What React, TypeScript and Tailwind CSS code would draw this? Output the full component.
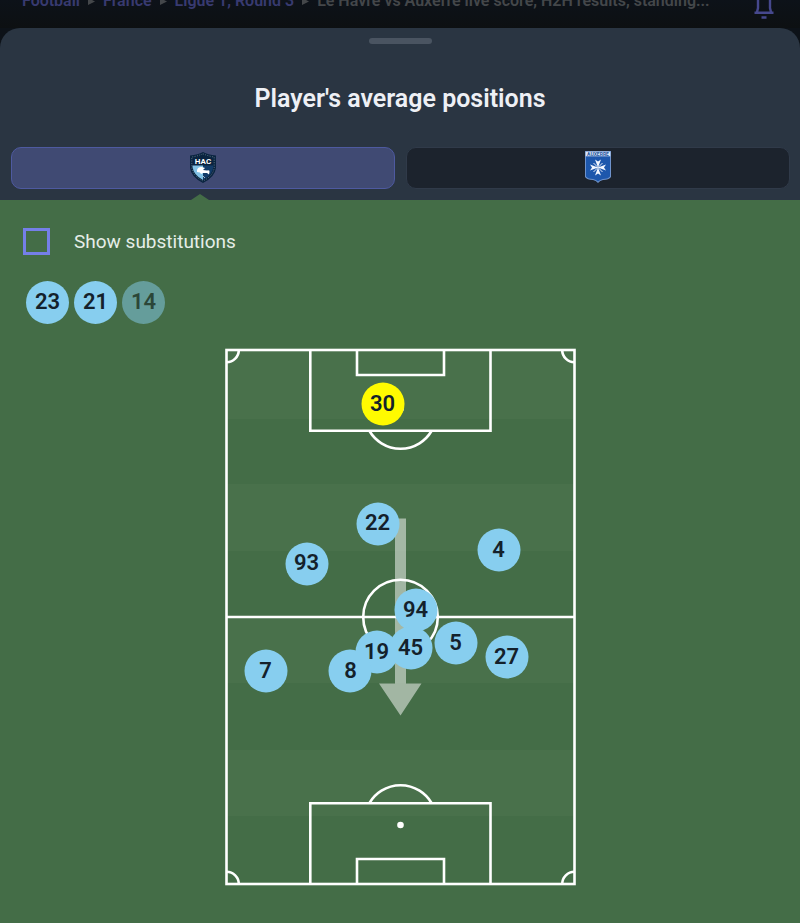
import { useState } from "react";

type Player = { number: number; x: number; y: number; keeper?: boolean };

const PITCH_WIDTH = 351;
const PITCH_HEIGHT = 538;

// Average positions in pitch units, measured from the top left corner.
const players: Player[] = [
  { number: 30, x: 158, y: 56, keeper: true },
  { number: 22, x: 153, y: 176 },
  { number: 93, x: 82, y: 216 },
  { number: 4, x: 274, y: 202 },
  { number: 94, x: 191, y: 262 },
  { number: 19, x: 152, y: 304 },
  { number: 45, x: 186, y: 300 },
  { number: 5, x: 231, y: 295 },
  { number: 27, x: 282, y: 309 },
  { number: 7, x: 41, y: 323 },
  { number: 8, x: 126, y: 323 },
];

const substitutes = [
  { number: 23, used: true },
  { number: 21, used: true },
  { number: 14, used: false },
];

function NumberBadge({ number, keeper, faded }: { number: number; keeper?: boolean; faded?: boolean }) {
  return (
    <span
      className={`flex size-[43px] items-center justify-center rounded-full pb-0.5 text-[22px] leading-none font-semibold text-[#14212b] ${
        keeper ? "bg-[#fffb00]" : "bg-[#87ceef]"
      } ${faded ? "opacity-50" : ""}`}
    >
      {number}
    </span>
  );
}

function Separator() {
  return (
    <svg viewBox="0 0 7 7" className="size-[7px] shrink-0" aria-hidden="true">
      <path d="M0 0 L7 3.5 L0 7Z" fill="#44474a" />
    </svg>
  );
}

function LeHavreCrest() {
  return (
    <svg viewBox="0 0 26 31" className="h-[31px] w-[26px]" aria-hidden="true">
      <path d="M13 0 Q18 2.5 26 3.5 V16 Q25 25 13 31 Q1 25 0 16 V3.5 Q8 2.5 13 0Z" fill="#0a2440" />
      <path d="M13 1.8 Q18 4 24.2 5 V16 Q23 24 13 29 Q3 24 1.8 16 V5 Q8 4 13 1.8Z" fill="none" stroke="#8aa5ac" strokeWidth=".6" strokeDasharray="1 1.4" />
      <path d="M2.5 13.5 H13 V28 Q3.5 23 2.5 15Z" fill="#83c3e6" />
      <path d="M13 13.5 H23.5 Q23 23 13 28Z" fill="#123c69" />
      <text x="13" y="11.8" textAnchor="middle" fontSize="8" fontWeight="700" fill="#fff">HAC</text>
      <path d="M7 18 Q8 14.5 12 15 L15 16 L13 18 L17 18.5 Q20 17.5 19.5 20 L19 22.5 L17 21 L13 21 L11 22 L10 20.5 L7 20Z" fill="#fff" />
      <path d="M13 24 L15 26" stroke="#a9bccb" strokeWidth="1" />
    </svg>
  );
}

function AuxerreCrest() {
  return (
    <svg viewBox="0 0 26 32" className="h-8 w-[26px]" aria-hidden="true">
      <path d="M0 0 H26 V26 Q24 29 18 29 Q15 29.5 13 32 Q11 29.5 8 29 Q2 29 0 26Z" fill="#6f93cc" />
      <path d="M1 5 H25 V25.5 Q23 28 18 28 Q15 28.5 13 30.5 Q11 28.5 8 28 Q3 28 1 25.5Z" fill="#1d57ac" />
      <rect x=".7" y=".7" width="24.6" height="4.6" fill="#dce6f4" />
      <text x="13" y="4.7" textAnchor="middle" fontSize="5" fontWeight="700" fill="#24579f">AUXERRE</text>
      <g fill="#f3f7ff" transform="translate(13 16.5)">
        <path d="M0 0 L-3 -8 L0 -6 L3 -8Z M0 0 L-3 8 L0 6 L3 8Z M0 0 L-8 -3 L-6 0 L-8 3Z M0 0 L8 -3 L6 0 L8 3Z" />
        <path d="M-4.5 -4.5 L4.5 4.5 M4.5 -4.5 L-4.5 4.5" stroke="#f3f7ff" strokeWidth=".9" />
      </g>
    </svg>
  );
}

function Pitch() {
  return (
    <svg viewBox={`0 0 ${PITCH_WIDTH} ${PITCH_HEIGHT}`} className="block w-full" aria-hidden="true">
      <g fill="#49714b">
        <rect x="2" y="3" width="347" height="68" />
        <rect x="2" y="136" width="347" height="67" />
        <rect x="2" y="269" width="347" height="66" />
        <rect x="2" y="402" width="347" height="66" />
      </g>
      <g fill="none" stroke="#fff" strokeWidth="2.6">
        <rect x="1.5" y="2" width="348" height="534" />
        <path d="M2 269 H349" />
        <circle cx="175.5" cy="269" r="37.3" />
        <path d="M85.3 2 V82.7 H265.5 V2 M132 2 V27 H219 V2" />
        <path d="M85.3 536 V455.3 H265.5 V536 M132 536 V511 H219 V536" />
        <path d="M144.5 83 A36 36 0 0 0 206.5 83 M144.5 455 A36 36 0 0 1 206.5 455" />
        <path d="M13.8 2 A12.3 12.3 0 0 1 1.5 14.3 M337.2 2 A12.3 12.3 0 0 0 349.5 14.3 M13.8 536 A12.3 12.3 0 0 0 1.5 523.7 M337.2 536 A12.3 12.3 0 0 1 349.5 523.7" />
      </g>
      <circle cx="175.5" cy="61" r="3.3" fill="#fff" />
      <circle cx="175.5" cy="477" r="3.3" fill="#fff" />
      <path d="M170 170.5 H181 V335.5 H196.5 L175.5 367.5 L154 335.5 H170Z" fill="#fff" fillOpacity=".5" />
    </svg>
  );
}

export default function App() {
  const [team, setTeam] = useState(0);
  const [showSubs, setShowSubs] = useState(false);

  const tabClass = "flex h-[42px] flex-1 items-center justify-center rounded-[10px] border pb-0.5";
  const activeTab = "border-[#4e5aa0] bg-[#404a73]";
  const idleTab = "border-[#303a49] bg-[#1c232d]";

  return (
    <div className="min-h-screen bg-[#0d1218] font-[Roboto,'Liberation_Sans',sans-serif]">
      <header className="flex h-7 items-start justify-between overflow-hidden bg-linear-to-b from-[#0d1219] to-[#0d1012] pr-6 pl-[22px]">
        <nav className="-mt-[9px] flex min-w-0 items-center gap-2 text-base leading-5 font-semibold whitespace-nowrap text-[#383a70]">
          <a href="#football">Football</a>
          <Separator />
          <a href="#france">France</a>
          <Separator />
          <a href="#ligue-1">Ligue 1, Round 3</a>
          <Separator />
          <span className="truncate text-[#44474a]">Le Havre vs Auxerre live score, H2H results, standing...</span>
        </nav>
        <button type="button" aria-label="Notifications" className="-mt-2 shrink-0">
          <svg viewBox="0 0 24 28" className="h-7 w-6" fill="none" stroke="#46488d" strokeWidth="2.4">
            <path d="M2.5 20.7 H21.5 M5 20 L6 16 V8 Q6 2 12 2 Q18 2 18 8 V16 L19 20 M9.5 25.5 H14.5" />
          </svg>
        </button>
      </header>

      <main className="flex min-h-[895px] flex-col overflow-hidden rounded-t-[20px] bg-[#2a3542]">
        <div className="mx-auto mt-2.5 h-1.5 w-[63px] shrink-0 rounded-[3px] bg-[#4a5461]" />
        <h1 className="mt-[37px] text-center text-[25px] leading-9 font-semibold text-[#eef0f5]">Player's average positions</h1>

        <div role="tablist" className="mt-[30px] flex gap-[11px] pr-2.5 pl-[11px]">
          <button type="button" role="tab" aria-label="Le Havre" aria-selected={team === 0} onClick={() => setTeam(0)} className={`${tabClass} ${team === 0 ? activeTab : idleTab}`}>
            <LeHavreCrest />
          </button>
          <button type="button" role="tab" aria-label="Auxerre" aria-selected={team === 1} onClick={() => setTeam(1)} className={`${tabClass} ${team === 1 ? activeTab : idleTab}`}>
            <AuxerreCrest />
          </button>
        </div>

        <div className={`mt-[5px] flex h-1.5 w-1/2 justify-center ${team === 1 ? "self-end" : ""}`}>
          <svg viewBox="0 0 18 6" className="h-1.5 w-[18px]" aria-hidden="true">
            <path d="M0 6 L9 0 L18 6Z" fill="#446d47" />
          </svg>
        </div>

        <section className="flex-1 bg-[#446d47] pt-7">
          <label className="ml-[23px] flex w-fit items-center gap-6 text-[19px] leading-[27px] text-[#e6eee8]">
            <input
              type="checkbox"
              checked={showSubs}
              onChange={(e) => setShowSubs(e.target.checked)}
              className="size-[27px] appearance-none border-3 border-[#757fe8] checked:bg-[#757fe8]"
            />
            Show substitutions
          </label>

          <div className="mt-[26px] ml-[26px] flex gap-[5px]">
            {substitutes.map((s) => (
              <NumberBadge key={s.number} number={s.number} faded={!s.used} />
            ))}
          </div>

          <div className="relative mx-auto mt-6 mb-9 w-[351px]">
            <Pitch />
            {players.map((p) => (
              <div
                key={p.number}
                className="absolute -translate-x-1/2 -translate-y-1/2"
                style={{ left: `${(p.x / PITCH_WIDTH) * 100}%`, top: `${(p.y / PITCH_HEIGHT) * 100}%` }}
              >
                <NumberBadge number={p.number} keeper={p.keeper} />
              </div>
            ))}
          </div>
        </section>
      </main>
    </div>
  );
}
